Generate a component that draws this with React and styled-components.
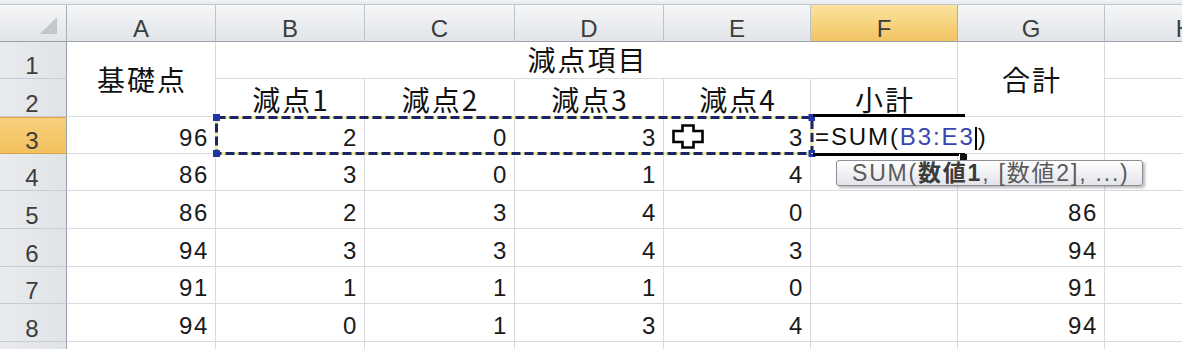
import React from 'react';
import styled, { createGlobalStyle, css } from 'styled-components';

const GRID_LINE = '#d9dbde';

const GlobalStyle = createGlobalStyle`
  *, *::before, *::after { box-sizing: border-box; }
  html, body { margin: 0; padding: 0; background: #ffffff; }
  body { font-family: "Liberation Sans", "Noto Sans CJK JP", sans-serif; color: #111; }
`;

// Pixel sizes of the visible tracks (row-header column first, then A..H).
const COLUMN_WIDTHS = [67, 149, 149, 150, 149, 147, 147, 147, 160];
// Top band, column-header row, then sheet rows 1..9.
const ROW_HEIGHTS = [5, 37, 37, 38, 37, 37, 38, 38, 37, 38, 37];

const LETTERS = ['A', 'B', 'C', 'D', 'E', 'F', 'G', 'H'];
const ACTIVE_COLUMN = 'F';
const ACTIVE_ROW = 3;

// Rows 3..8, columns A..G (null = empty cell)
const SCORES = [
  [96, 2, 0, 3, 3, null, null],
  [86, 3, 0, 1, 4, null, null],
  [86, 2, 3, 4, 0, null, 86],
  [94, 3, 3, 4, 3, null, 94],
  [91, 1, 1, 1, 0, null, 91],
  [94, 0, 1, 3, 4, null, 94],
];

const gridCol = (letter) => LETTERS.indexOf(letter) + 2;
const gridRow = (sheetRow) => sheetRow + 2;

const Viewport = styled.div`
  position: relative;
  width: 1182px;
  height: 349px;
  overflow: hidden;
  background: #fff;
`;

const Sheet = styled.div`
  display: grid;
  grid-template-columns: ${COLUMN_WIDTHS.map((w) => `${w}px`).join(' ')};
  grid-template-rows: ${ROW_HEIGHTS.map((h) => `${h}px`).join(' ')};
  width: max-content;
`;

const TopBand = styled.div`
  grid-column: 1 / -1;
  grid-row: 1;
  background: linear-gradient(#f2f4f7, #e4e8ec);
  border-bottom: 1px solid #c4c9cf;
`;

const headerFont = css`
  font-family: "Liberation Sans", sans-serif;
  font-size: 24px;
  line-height: 24px;
  color: #3d3d3d;
`;

const Corner = styled.div`
  grid-column: 1;
  grid-row: 2;
  display: flex;
  align-items: flex-end;
  justify-content: flex-end;
  padding: 0 9px 7px 0;
  background: linear-gradient(#f5f6f8, #e1e4e8);
  border-right: 1px solid #a8aeb5;
  border-bottom: 1px solid #9aa1a9;
`;

const ColHead = styled.div`
  grid-column: ${(p) => p.$col};
  grid-row: 2;
  display: flex;
  align-items: flex-end;
  justify-content: center;
  padding-bottom: 0;
  background: ${(p) =>
    p.$active ? 'linear-gradient(#fbe39f, #f2c462)' : 'linear-gradient(#f5f6f8, #e1e4e8)'};
  border-right: 1px solid ${(p) => (p.$active ? '#d2ad69' : '#bdc3ca')};
  border-bottom: 1px solid #9aa1a9;
  ${headerFont}
`;

const RowHead = styled.div`
  grid-column: 1;
  grid-row: ${(p) => p.$row};
  display: flex;
  align-items: flex-end;
  justify-content: center;
  padding: 0 2px 0 0;
  background: ${(p) =>
    p.$active ? 'linear-gradient(#f7cf7c, #f2c25e)' : 'linear-gradient(90deg, #e9ebee, #e0e3e7)'};
  border-top: ${(p) => (p.$active ? '1px solid #e2a444' : 'none')};
  border-right: 1px solid #9aa1a9;
  border-bottom: 1px solid ${(p) => (p.$active ? '#d9a24a' : '#c7ccd2')};
  ${headerFont}
`;

const numberText = css`
  justify-content: flex-end;
  align-items: flex-end;
  padding: 0 6px 3px 0;
  font-family: "Liberation Sans", sans-serif;
  font-size: 24px;
  line-height: 24px;
  letter-spacing: 1.6px;
  color: #1a1a1a;
`;

const labelText = css`
  justify-content: center;
  align-items: ${(p) => (p.$middle ? 'center' : 'flex-end')};
  padding: 0 0 ${(p) => p.$pb ?? 0}px 2px;
  font-family: "Noto Sans CJK JP", "Noto Sans CJK SC", sans-serif;
  font-size: 28px;
  line-height: 28px;
  letter-spacing: 2px;
  color: #111;
`;

const Cell = styled.div`
  grid-column: ${(p) => p.$col} / span ${(p) => p.$span || 1};
  grid-row: ${(p) => p.$row} / span ${(p) => p.$rows || 1};
  display: flex;
  min-width: 0;
  white-space: nowrap;
  border-right: 1px solid ${GRID_LINE};
  border-bottom: 1px solid ${GRID_LINE};
  ${(p) => (p.$kind === 'num' ? numberText : p.$kind === 'label' ? labelText : '')}
`;

/* Range reference being picked for the formula (B3:E3) */
const RangeMarquee = styled.div`
  grid-column: ${gridCol('B')} / span 4;
  grid-row: ${gridRow(3)};
  position: relative;
  z-index: 2;
  pointer-events: none;
`;

const MarqueeSvg = styled.svg`
  position: absolute;
  left: -2px;
  top: -2px;
  overflow: visible;
`;

/* The cell being edited (F3) */
const ActiveCell = styled.div`
  grid-column: ${gridCol('F')};
  grid-row: ${gridRow(3)};
  position: relative;
  z-index: 3;
  border-bottom: 1px solid ${GRID_LINE};
`;

const ActiveFrame = styled.div`
  position: absolute;
  left: 2px;
  right: -7px;
  top: -3px;
  bottom: -3px;
  border-top: 3px solid #000;
  border-bottom: 3px solid #000;
`;

const FillHandle = styled.div`
  position: absolute;
  left: 148px;
  top: 37px;
  width: 8px;
  height: 7px;
  background: #111;
  border-left: 1px solid #fff;
`;

const Editor = styled.div`
  position: absolute;
  left: 4px;
  top: 0;
  bottom: 0;
  display: flex;
  align-items: flex-end;
  padding: 0 4px 3px 0;
  background: #fff;
  white-space: nowrap;
  font-family: "Liberation Sans", sans-serif;
  font-size: 24px;
  line-height: 24px;
  letter-spacing: 1.9px;
  color: #111;
`;

const RefText = styled.span`
  color: #3a45b4;
`;

const Caret = styled.span`
  display: inline-block;
  width: 2px;
  height: 23px;
  margin: 0 1px 0 0;
  background: #000;
  vertical-align: -5px;
`;

const Tooltip = styled.div`
  position: absolute;
  left: 25px;
  top: 43px;
  height: 26px;
  display: flex;
  align-items: center;
  padding: 0 12px 0 15px;
  border: 1px solid #8c8f95;
  border-radius: 3px;
  background: linear-gradient(#ffffff, #e3e4ea);
  box-shadow: 2px 2px 3px rgba(0, 0, 0, 0.28);
  white-space: nowrap;
  font-family: "Liberation Sans", "Noto Sans CJK JP", sans-serif;
  font-size: 23px;
  line-height: 23px;
  letter-spacing: 1.8px;
  color: #5a5a5a;
`;

const TipArg = styled.b`
  font-weight: 700;
  color: #3c3c3c;
`;

const Pointer = styled.svg`
  position: absolute;
  left: 672px;
  top: 124px;
  z-index: 5;
  pointer-events: none;
`;

function SelectAllMark() {
  return (
    <svg width="17" height="17" viewBox="0 0 17 17">
      <polygon points="17,0 17,17 0,17" fill="#c3c6ca" />
    </svg>
  );
}

function Marquee({ width, height }) {
  const right = width + 3;
  const bottom = height + 1.5;
  const corners = [
    [2.5, 2.5],
    [2.5, bottom],
    [right, 2.5],
    [right, bottom],
  ];
  return (
    <MarqueeSvg width={width + 6} height={height + 6}>
      <rect x="2.5" y="2.5" width={right - 2.5} height={bottom - 2.5} fill="none" stroke="#efef9c" strokeWidth="3" />
      <rect
        x="2.5"
        y="2.5"
        width={right - 2.5}
        height={bottom - 2.5}
        fill="none"
        stroke="#1c2468"
        strokeWidth="3"
        strokeDasharray="9 4"
      />
      {corners.map(([cx, cy], i) => (
        <rect key={i} x={cx - 3.5} y={cy - 3.5} width="7" height="7" fill="#1f36a6" />
      ))}
    </MarqueeSvg>
  );
}

export default function App() {
  const cells = [];

  // Rows 1 and 2: merged titles
  cells.push(
    <Cell key="A1" $kind="label" $middle $col={gridCol('A')} $row={gridRow(1)} $rows={2}>基礎点</Cell>,
    <Cell key="B1" $kind="label" $pb={5} $col={gridCol('B')} $row={gridRow(1)} $span={5}>減点項目</Cell>,
    <Cell key="G1" $kind="label" $middle $col={gridCol('G')} $row={gridRow(1)} $rows={2}>合計</Cell>,
    <Cell key="H1" $col={gridCol('H')} $row={gridRow(1)} />,
  );
  ['減点1', '減点2', '減点3', '減点4', '小計'].forEach((text, i) => {
    cells.push(
      <Cell key={`r2-${i}`} $kind="label" $pb={3} $col={gridCol('B') + i} $row={gridRow(2)}>
        {text}
      </Cell>
    );
  });
  cells.push(<Cell key="H2" $col={gridCol('H')} $row={gridRow(2)} />);

  // Rows 3..8: scores
  SCORES.forEach((values, r) => {
    const sheetRow = r + 3;
    values.forEach((v, c) => {
      const letter = LETTERS[c];
      if (letter === ACTIVE_COLUMN && sheetRow === ACTIVE_ROW) return;
      cells.push(
        <Cell key={`${letter}${sheetRow}`} $kind={v === null ? undefined : 'num'} $col={c + 2} $row={gridRow(sheetRow)}>
          {v}
        </Cell>
      );
    });
    cells.push(<Cell key={`H${sheetRow}`} $col={gridCol('H')} $row={gridRow(sheetRow)} />);
  });

  // Row 9: empty
  LETTERS.forEach((letter) => {
    cells.push(<Cell key={`${letter}9`} $col={gridCol(letter)} $row={gridRow(9)} />);
  });

  const marqueeWidth = COLUMN_WIDTHS.slice(2, 6).reduce((a, b) => a + b, 0);

  return (
    <>
      <GlobalStyle />
      <Viewport>
        <Sheet>
          <TopBand />
          <Corner>
            <SelectAllMark />
          </Corner>
          {LETTERS.map((letter) => (
            <ColHead key={letter} $col={gridCol(letter)} $active={letter === ACTIVE_COLUMN}>
              {letter}
            </ColHead>
          ))}
          {Array.from({ length: 9 }, (_, i) => i + 1).map((n) => (
            <RowHead key={n} $row={gridRow(n)} $active={n === ACTIVE_ROW}>
              {n}
            </RowHead>
          ))}
          {cells}
          <RangeMarquee>
            <Marquee width={marqueeWidth} height={ROW_HEIGHTS[4]} />
          </RangeMarquee>
          <ActiveCell>
            <ActiveFrame />
            <Editor>
              <span>
                =SUM(<RefText>B3:E3</RefText>
                <Caret />)
              </span>
            </Editor>
            <FillHandle />
            <Tooltip>
              SUM(<TipArg>数値1</TipArg>, [数値2], ...)
            </Tooltip>
          </ActiveCell>
        </Sheet>
        <Pointer width="32" height="25" viewBox="0 0 32 25">
          <polygon
            points="10.5,1.5 21.5,1.5 21.5,7 30.5,7 30.5,18 21.5,18 21.5,23.5 10.5,23.5 10.5,18 1.5,18 1.5,7 10.5,7"
            fill="#ffffff"
            stroke="#000000"
            strokeWidth="2.6"
            strokeLinejoin="miter"
          />
        </Pointer>
      </Viewport>
    </>
  );
}
